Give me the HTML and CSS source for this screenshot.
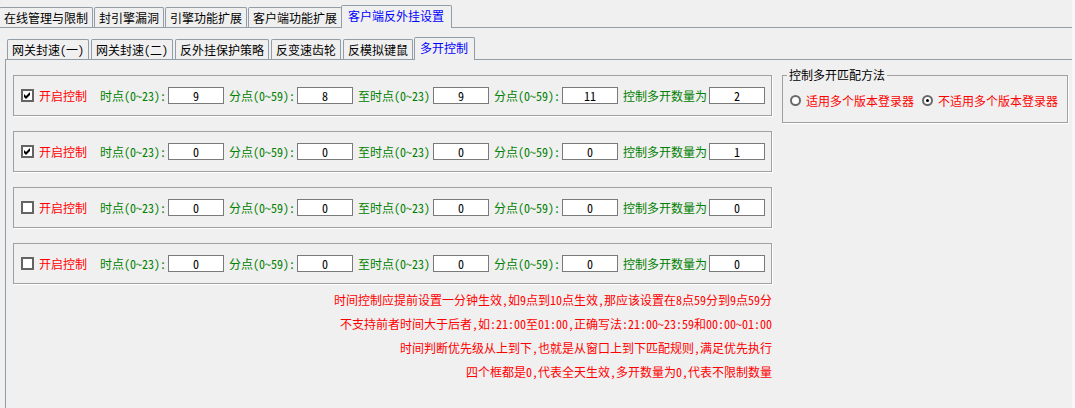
FILE: index.html
```html
<!DOCTYPE html>
<html lang="zh-CN">
<head>
    <meta charset="UTF-8">
    <title>客户端反外挂设置</title>
    <link rel="stylesheet" href="styles.css">
</head>
<body>
    <div class="window">
        <div class="tabbar">
            <div class="tab">在线管理与限制</div>
            <div class="tab">封引擎漏洞</div>
            <div class="tab">引擎功能扩展</div>
            <div class="tab">客户端功能扩展</div>
            <div class="tab active">客户端反外挂设置</div>
        </div>

        <div class="inner">
            <div class="tabbar sub">
                <div class="tab">网关封速(一)</div>
                <div class="tab">网关封速(二)</div>
                <div class="tab">反外挂保护策略</div>
                <div class="tab">反变速齿轮</div>
                <div class="tab">反模拟键鼠</div>
                <div class="tab active">多开控制</div>
            </div>

            <div class="panel">
                <div class="rules">
                    <div class="rule">
                        <span class="check on"><svg width="9" height="9" viewBox="0 0 9 9"><path d="M1 3 L3 5 L7 1 L7 4 L3 8 L1 6 Z" fill="#000"/></svg></span>
                        <span class="enable">开启控制</span>
                        <label class="lbl w68">时点(0~23):</label><input type="text" value="9">
                        <label class="lbl w68">分点(0~59):</label><input type="text" value="8">
                        <label class="lbl w75">至时点(0~23)</label><input type="text" value="9">
                        <label class="lbl w68">分点(0~59):</label><input type="text" value="11">
                        <label class="lbl w86">控制多开数量为</label><input type="text" value="2">
                    </div>
                    <div class="rule">
                        <span class="check on"><svg width="9" height="9" viewBox="0 0 9 9"><path d="M1 3 L3 5 L7 1 L7 4 L3 8 L1 6 Z" fill="#000"/></svg></span>
                        <span class="enable">开启控制</span>
                        <label class="lbl w68">时点(0~23):</label><input type="text" value="0">
                        <label class="lbl w68">分点(0~59):</label><input type="text" value="0">
                        <label class="lbl w75">至时点(0~23)</label><input type="text" value="0">
                        <label class="lbl w68">分点(0~59):</label><input type="text" value="0">
                        <label class="lbl w86">控制多开数量为</label><input type="text" value="1">
                    </div>
                    <div class="rule">
                        <span class="check"></span>
                        <span class="enable">开启控制</span>
                        <label class="lbl w68">时点(0~23):</label><input type="text" value="0">
                        <label class="lbl w68">分点(0~59):</label><input type="text" value="0">
                        <label class="lbl w75">至时点(0~23)</label><input type="text" value="0">
                        <label class="lbl w68">分点(0~59):</label><input type="text" value="0">
                        <label class="lbl w86">控制多开数量为</label><input type="text" value="0">
                    </div>
                    <div class="rule">
                        <span class="check"></span>
                        <span class="enable">开启控制</span>
                        <label class="lbl w68">时点(0~23):</label><input type="text" value="0">
                        <label class="lbl w68">分点(0~59):</label><input type="text" value="0">
                        <label class="lbl w75">至时点(0~23)</label><input type="text" value="0">
                        <label class="lbl w68">分点(0~59):</label><input type="text" value="0">
                        <label class="lbl w86">控制多开数量为</label><input type="text" value="0">
                    </div>

                    <div class="notes">
                        <p>时间控制应提前设置一分钟生效,如9点到10点生效,那应该设置在8点59分到9点59分</p>
                        <p>不支持前者时间大于后者,如:21:00至01:00,正确写法:21:00~23:59和00:00~01:00</p>
                        <p>时间判断优先级从上到下,也就是从窗口上到下匹配规则,满足优先执行</p>
                        <p>四个框都是0,代表全天生效,多开数量为0,代表不限制数量</p>
                    </div>
                </div>

                <fieldset class="match">
                    <legend>控制多开匹配方法</legend>
                    <div class="radios">
                        <span class="radio"></span>
                        <span class="opt">适用多个版本登录器</span>
                        <span class="radio on"></span>
                        <span class="opt">不适用多个版本登录器</span>
                    </div>
                </fieldset>
            </div>
        </div>
    </div>
</body>
</html>
```

FILE: styles.css
```css
html {
    background-color: #f7f7f7;
}

body {
    margin: 0;
    font-family: "Noto Sans Mono CJK SC", "Noto Sans CJK SC", "Liberation Sans", sans-serif;
    font-size: 12px;
    color: #000;
}

.window {
    width: 1072px;
    height: 408px;
    background-color: #f0f0f0;
    overflow: hidden;
}

/* tab strips */
.tabbar {
    display: flex;
    align-items: flex-end;
    height: 27px;
    margin-left: -1px;
    border-bottom: 1px solid #919ea8;
}

.tab {
    height: 19px;
    line-height: 19px;
    padding: 0 4px;
    margin-right: 1px;
    border: 1px solid #919ea8;
    border-bottom: none;
    border-radius: 2px 2px 0 0;
    background-color: #f0f0f0;
    white-space: nowrap;
}

.tab.active {
    height: 22px;
    line-height: 20px;
    padding: 0 7px 0 6px;
    margin-left: -2px;
    margin-bottom: -1px;
    color: #0000ff;
}

.inner {
    margin-left: 5px;
}

.tabbar.sub {
    height: 31px;
    margin-left: 0;
    padding-left: 2px;
}

.tabbar.sub .tab {
    margin-right: 2px;
}

.tabbar.sub .tab.active {
    margin-left: -1px;
    padding: 0 6px 0 5px;
}

/* panel body */
.panel {
    display: flex;
    align-items: flex-start;
    height: 348px;
    padding: 7px 0 0 7px;
    border-left: 1px solid #919ea8;
}

.rules {
    width: 759px;
    padding-top: 8px;
}

.rule {
    display: flex;
    align-items: center;
    box-sizing: border-box;
    height: 41px;
    margin-bottom: 15px;
    padding-left: 7px;
    border: 1px solid #a0a0a0;
    box-shadow: 1px 1px 0 #fff;
}

.rule:nth-child(4) {
    margin-bottom: 4px;
}

.check {
    display: flex;
    align-items: center;
    justify-content: center;
    box-sizing: border-box;
    width: 13px;
    height: 13px;
    border: 2px solid #646464;
    background-color: #fff;
}

.enable {
    width: 61px;
    margin-left: 5px;
    color: #ff0000;
}

.lbl {
    color: #008000;
    white-space: nowrap;
}

.w68 { width: 68px; }
.w75 { width: 75px; }
.w86 { width: 86px; }

.rule input {
    box-sizing: border-box;
    width: 56px;
    height: 17px;
    margin: 0 5px 0 0;
    padding: 0;
    border: 1px solid #7a7a7a;
    background-color: #fff;
    font: inherit;
    text-align: center;
}

.notes {
    text-align: right;
    color: #ff0000;
}

.notes p {
    margin: 0;
    line-height: 24px;
    white-space: nowrap;
}

/* match method group */
.match {
    box-sizing: border-box;
    width: 286px;
    margin: 0 0 0 10px;
    padding: 0 0 14px 4px;
    border: 1px solid #a0a0a0;
    box-shadow: 1px 1px 0 #fff;
}

.match legend {
    padding: 0 2px;
    line-height: 16px;
}

.radios {
    display: flex;
    align-items: center;
    height: 16px;
    margin-top: 9px;
    padding-left: 3px;
    white-space: nowrap;
}

.radio {
    position: relative;
    flex: none;
    box-sizing: border-box;
    width: 11px;
    height: 11px;
    border: 2px solid #6a6a6a;
    border-radius: 50%;
    background-color: #fff;
}

.radio.on::after {
    content: "";
    position: absolute;
    left: 2px;
    top: 2px;
    width: 3px;
    height: 3px;
    border-radius: 50%;
    background-color: #000;
}

.opt {
    margin: 0 8px 0 5px;
    color: #ff0000;
}
```
